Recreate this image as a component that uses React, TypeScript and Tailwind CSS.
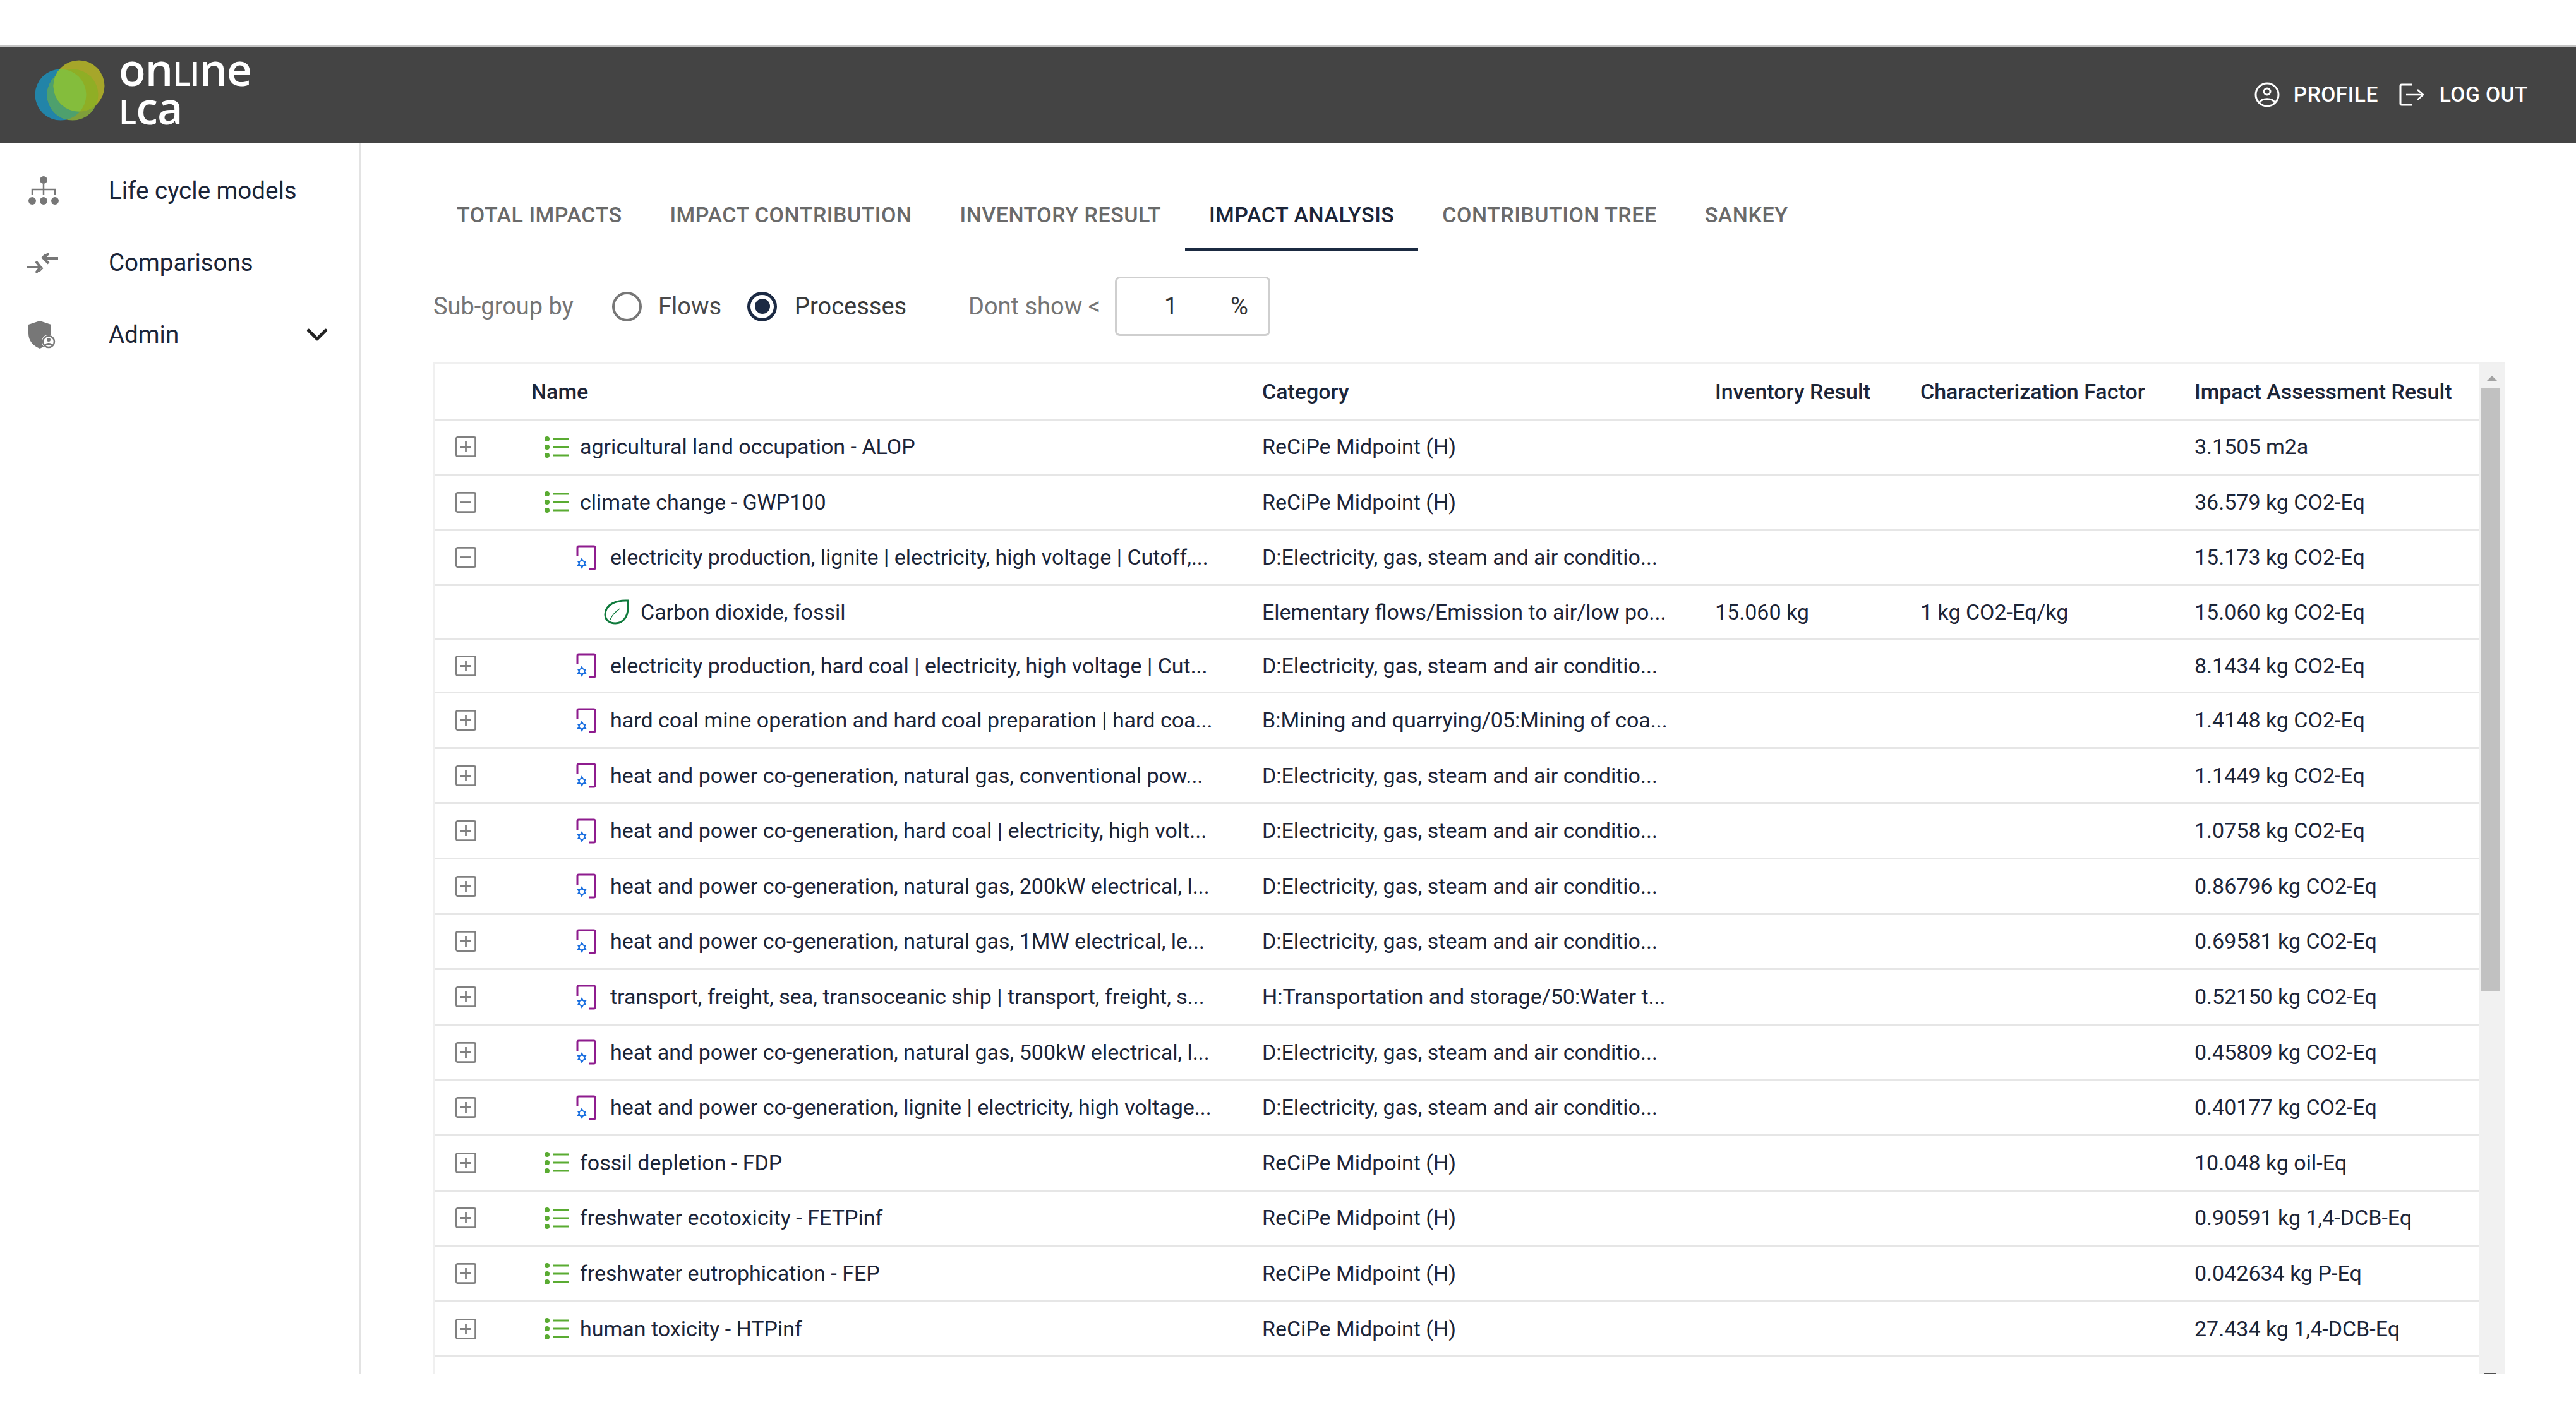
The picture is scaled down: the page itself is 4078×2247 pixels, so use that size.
import { ChevronDown } from "lucide-react";

type Row = {
  level: 0 | 1 | 2;
  toggle?: "plus" | "minus";
  name: string;
  category: string;
  inventory?: string;
  factor?: string;
  result: string;
  short?: boolean;
};

const elec = "D:Electricity, gas, steam and air conditio...";
const recipe = "ReCiPe Midpoint (H)";

const rows: Row[] = [
  { level: 0, toggle: "plus", name: "agricultural land occupation - ALOP", category: recipe, result: "3.1505 m2a" },
  { level: 0, toggle: "minus", name: "climate change - GWP100", category: recipe, result: "36.579 kg CO2-Eq" },
  { level: 1, toggle: "minus", name: "electricity production, lignite | electricity, high voltage | Cutoff,...", category: elec, result: "15.173 kg CO2-Eq" },
  { level: 2, name: "Carbon dioxide, fossil", category: "Elementary flows/Emission to air/low po...", inventory: "15.060 kg", factor: "1 kg CO2-Eq/kg", result: "15.060 kg CO2-Eq", short: true },
  { level: 1, toggle: "plus", name: "electricity production, hard coal | electricity, high voltage | Cut...", category: elec, result: "8.1434 kg CO2-Eq", short: true },
  { level: 1, toggle: "plus", name: "hard coal mine operation and hard coal preparation | hard coa...", category: "B:Mining and quarrying/05:Mining of coa...", result: "1.4148 kg CO2-Eq" },
  { level: 1, toggle: "plus", name: "heat and power co-generation, natural gas, conventional pow...", category: elec, result: "1.1449 kg CO2-Eq" },
  { level: 1, toggle: "plus", name: "heat and power co-generation, hard coal | electricity, high volt...", category: elec, result: "1.0758 kg CO2-Eq" },
  { level: 1, toggle: "plus", name: "heat and power co-generation, natural gas, 200kW electrical, l...", category: elec, result: "0.86796 kg CO2-Eq" },
  { level: 1, toggle: "plus", name: "heat and power co-generation, natural gas, 1MW electrical, le...", category: elec, result: "0.69581 kg CO2-Eq" },
  { level: 1, toggle: "plus", name: "transport, freight, sea, transoceanic ship | transport, freight, s...", category: "H:Transportation and storage/50:Water t...", result: "0.52150 kg CO2-Eq" },
  { level: 1, toggle: "plus", name: "heat and power co-generation, natural gas, 500kW electrical, l...", category: elec, result: "0.45809 kg CO2-Eq" },
  { level: 1, toggle: "plus", name: "heat and power co-generation, lignite | electricity, high voltage...", category: elec, result: "0.40177 kg CO2-Eq" },
  { level: 0, toggle: "plus", name: "fossil depletion - FDP", category: recipe, result: "10.048 kg oil-Eq" },
  { level: 0, toggle: "plus", name: "freshwater ecotoxicity - FETPinf", category: recipe, result: "0.90591 kg 1,4-DCB-Eq" },
  { level: 0, toggle: "plus", name: "freshwater eutrophication - FEP", category: recipe, result: "0.042634 kg P-Eq" },
  { level: 0, toggle: "plus", name: "human toxicity - HTPinf", category: recipe, result: "27.434 kg 1,4-DCB-Eq" },
];

const tabs = ["TOTAL IMPACTS", "IMPACT CONTRIBUTION", "INVENTORY RESULT", "IMPACT ANALYSIS", "CONTRIBUTION TREE", "SANKEY"];
const gridCols = "grid grid-cols-[152px_1157px_717px_325px_434px_1fr] items-center";

function Logo() {
  return (
    <svg width="125" height="110" viewBox="0 0 125 110" className="shrink-0">
      <clipPath id="blueClip">
        <circle cx="41" cy="55" r="40.5" />
      </clipPath>
      <clipPath id="midClip">
        <circle cx="60" cy="55" r="40.5" />
      </clipPath>
      <circle cx="41" cy="55" r="40.5" fill="#2284a8" />
      <circle cx="60" cy="55" r="40.5" fill="#7f9f3a" />
      <circle cx="70" cy="41" r="40.5" fill="#a6a62a" />
      <circle cx="60" cy="55" r="40.5" fill="#4ea06d" clipPath="url(#blueClip)" />
      <circle cx="70" cy="41" r="40.5" fill="#8fae25" clipPath="url(#midClip)" />
      <circle cx="70" cy="41" r="40.5" fill="#84bd3c" clipPath="url(#blueClip)" />
    </svg>
  );
}

function HierarchyIcon() {
  return (
    <svg width="48" height="46" viewBox="0 0 48 46" fill="#777">
      <circle cx="24" cy="6" r="6" />
      <circle cx="6" cy="39" r="6" />
      <circle cx="24" cy="39" r="6" />
      <circle cx="42" cy="39" r="6" />
      <path d="M6 29V21H42V29M24 12V29" fill="none" stroke="#777" strokeWidth="2.5" />
    </svg>
  );
}

function CompareIcon() {
  return (
    <svg width="50" height="33" viewBox="0 0 50 33" fill="none" stroke="#777" strokeWidth="4">
      <path d="M0 23H21M15 14L22 23L15 32" />
      <path d="M50 9H29M35 1L27 9L35 17" />
      <path d="M30 2L24 9M26 24L20 30" strokeWidth="2" />
    </svg>
  );
}

function AdminIcon() {
  return (
    <svg width="44" height="44" viewBox="0 0 44 44">
      <path d="M18 0L36 6V20C36 32 28 40 18 44C8 40 0 32 0 20V6Z" fill="#777" />
      <circle cx="32" cy="33" r="11" fill="#fff" />
      <circle cx="32" cy="33" r="9" fill="none" stroke="#777" strokeWidth="2.5" />
      <circle cx="32" cy="30" r="3" fill="#777" />
      <path d="M26 38C27 34 37 34 38 38Z" fill="#777" />
    </svg>
  );
}

function ProfileIcon() {
  return (
    <svg width="40" height="40" viewBox="0 0 40 40" fill="none" stroke="#fff" strokeWidth="3">
      <circle cx="20" cy="20" r="18" />
      <circle cx="20" cy="15" r="5" />
      <path d="M8 32C12 25 28 25 32 32" />
    </svg>
  );
}

function LogoutIcon() {
  return (
    <svg width="40" height="36" viewBox="0 0 40 36" fill="none" stroke="#fff" strokeWidth="3">
      <path d="M20 2H4Q2 2 2 4V32Q2 34 4 34H20" />
      <path d="M11 18H37M29 10L38 18L29 26" strokeWidth="2.5" />
    </svg>
  );
}

function Toggle({ kind }: { kind: "plus" | "minus" }) {
  return (
    <svg width="33" height="33" viewBox="0 0 33 33" fill="none" stroke="#808080" strokeWidth="2.8">
      <rect x="1.4" y="1.4" width="30.2" height="30.2" rx="2" />
      <path d={kind === "plus" ? "M8 16.5H25M16.5 8V25" : "M8 16.5H25"} />
    </svg>
  );
}

function ListIcon() {
  return (
    <svg width="40" height="34" viewBox="0 0 40 34" fill="#5aab32">
      <circle cx="5" cy="4" r="4" />
      <circle cx="5" cy="17" r="4" />
      <circle cx="5" cy="30" r="4" />
      <rect x="14" y="2.5" width="26" height="3" />
      <rect x="14" y="15.5" width="26" height="3" />
      <rect x="14" y="28.5" width="26" height="3" />
    </svg>
  );
}

function ProcessIcon() {
  return (
    <svg width="32" height="40" viewBox="0 0 32 40" fill="none">
      <path d="M2 18V4Q2 2 4 2H28Q30 2 30 4V36Q30 38 28 38H21" stroke="#8e1c8e" strokeWidth="3" />
      <path d="M9 20L16.5 33H1.5Z" fill="#1a6fe0" />
      <path d="M9 38L1.5 25H16.5Z" fill="#1a6fe0" />
      <circle cx="9" cy="29" r="3.2" fill="#fff" />
    </svg>
  );
}

function LeafIcon() {
  return (
    <svg width="40" height="40" viewBox="0 0 40 40" fill="none" stroke="#0f7a3c">
      <path d="M38 2C20 1 2 8 2 24C2 33 9 38 18 38C30 38 38 28 38 14Z" strokeWidth="3" />
      <path d="M10 32C13 25 18 20 25 15" strokeWidth="1.5" />
    </svg>
  );
}

function Radio({ checked }: { checked?: boolean }) {
  return checked ? (
    <span className="flex h-[47px] w-[47px] items-center justify-center rounded-full border-[5px] border-[#1c2a44]">
      <span className="h-[24px] w-[24px] rounded-full bg-[#1c2a44]" />
    </span>
  ) : (
    <span className="h-[47px] w-[47px] rounded-full border-4 border-[#777]" />
  );
}

function NameCell({ row }: { row: Row }) {
  if (row.level === 0) {
    return (
      <div className="flex items-center pl-[20px]">
        <span className="w-[57px] shrink-0"><ListIcon /></span>
        <span className="whitespace-nowrap">{row.name}</span>
      </div>
    );
  }
  if (row.level === 1) {
    return (
      <div className="flex items-center pl-[71px]">
        <span className="w-[54px] shrink-0"><ProcessIcon /></span>
        <span className="whitespace-nowrap">{row.name}</span>
      </div>
    );
  }
  return (
    <div className="flex items-center pl-[115px]">
      <span className="w-[58px] shrink-0"><LeafIcon /></span>
      <span className="whitespace-nowrap">{row.name}</span>
    </div>
  );
}

export default function App() {
  return (
    <div className="flex h-[2247px] w-[4078px] flex-col overflow-hidden bg-white pt-[71px] font-['Roboto',sans-serif] text-[#1c2538]">
      <header className="flex h-[155px] shrink-0 items-center justify-between border-t-[3px] border-[#c4c4c4] bg-[#444444] pl-[55px] pr-[76px]">
        <div className="flex items-center">
          <Logo />
          <div className="mb-[14px] ml-[8px] font-['Open_Sans',sans-serif] text-[70px] font-semibold leading-[55px] tracking-[-1px] text-white">
            <div>
              on<span className="text-[52px]">LI</span>ne
            </div>
            <div>
              <span className="text-[52px]">L</span>ca
            </div>
          </div>
        </div>
        <div className="flex items-center text-[33.5px] font-medium tracking-[0.5px] text-white">
          <ProfileIcon />
          <span className="ml-[22px]">PROFILE</span>
          <span className="ml-[33px]"><LogoutIcon /></span>
          <span className="ml-[24px]">LOG OUT</span>
        </div>
      </header>

      <div className="flex h-[1950px] shrink-0">
        <aside className="w-[571px] shrink-0 border-r-[3px] border-[#e3e3e3] pt-[19px] text-[38.5px]">
          <div className="flex h-[114px] items-center pl-[45px]">
            <span className="w-[127px]"><HierarchyIcon /></span>
            Life cycle models
          </div>
          <div className="flex h-[114px] items-center pl-[42px]">
            <span className="w-[130px]"><CompareIcon /></span>
            Comparisons
          </div>
          <div className="flex h-[114px] items-center pl-[45px]">
            <span className="w-[127px]"><AdminIcon /></span>
            Admin
            <ChevronDown className="ml-[192px] h-[54px] w-[54px]" strokeWidth={2.2} color="#222" />
          </div>
        </aside>

        <main className="flex min-w-0 flex-1 flex-col pl-[115px] pr-[113px] pt-[55px]">
          <nav className="-ml-[1px] flex h-[116px] shrink-0 text-[34px] font-medium tracking-[0.5px]">
            {tabs.map((tab) =>
              tab === "IMPACT ANALYSIS" ? (
                <div key={tab} className="flex items-center border-b-4 border-[#1b2a41] px-[38px] pt-[6px] text-[#1c2538]">
                  {tab}
                </div>
              ) : (
                <div key={tab} className="flex items-center border-b-4 border-transparent px-[38px] pt-[6px] text-[#6a6a6a]">
                  {tab}
                </div>
              )
            )}
          </nav>

          <div className="mt-[41px] flex h-[94px] shrink-0 items-center text-[38px]">
            <span className="w-[283px] text-[#757575]">Sub-group by</span>
            <Radio />
            <span className="ml-[26px] w-[141px] text-[#4a4a4a]">Flows</span>
            <Radio checked />
            <span className="ml-[28px] w-[275px] text-[#3a3a3a]">Processes</span>
            <span className="w-[232px] text-[#757575]">Dont show &lt;</span>
            <div className="flex h-[94px] w-[246px] items-center rounded-[8px] border-[3px] border-[#cfcfcf] pl-[75px] text-[#333]">
              <span className="w-[105px]">1</span>
              <span>%</span>
            </div>
          </div>

          <div className="mt-[41px] flex min-h-0 flex-1 overflow-hidden border-l-[3px] border-t-[3px] border-[#f0f0f0] text-[34px]">
            <div className="min-w-0 flex-1">
              <div className={`${gridCols} h-[89.5px] border-b-[3px] border-[#e6e6e6] pt-[3px] font-medium`}>
                <span />
                <span>Name</span>
                <span>Category</span>
                <span>Inventory Result</span>
                <span>Characterization Factor</span>
                <span>Impact Assessment Result</span>
              </div>
              {rows.map((row) => (
                <div
                  key={row.name}
                  className={`${gridCols} ${row.short ? "h-[85px]" : "h-[87.6px]"} border-b-[3px] border-[#e6e6e6]`}
                >
                  <span className="pl-[32px]">{row.toggle && <Toggle kind={row.toggle} />}</span>
                  <NameCell row={row} />
                  <span className="whitespace-nowrap">{row.category}</span>
                  <span>{row.inventory}</span>
                  <span>{row.factor}</span>
                  <span className="whitespace-nowrap">{row.result}</span>
                </div>
              ))}
            </div>
            <div className="relative w-[41px] shrink-0 bg-[#f1f1f1]">
              <div className="mx-auto mt-[19px] h-0 w-0 border-x-[9px] border-b-[9px] border-x-transparent border-b-[#a3a3a3]" />
              <div className="ml-[4px] mt-[10px] h-[955px] w-[29px] bg-[#c1c1c1]" />
              <div className="absolute bottom-0 left-[9px] h-[2px] w-[19px] bg-[#505050]" />
            </div>
          </div>
        </main>
      </div>
    </div>
  );
}
